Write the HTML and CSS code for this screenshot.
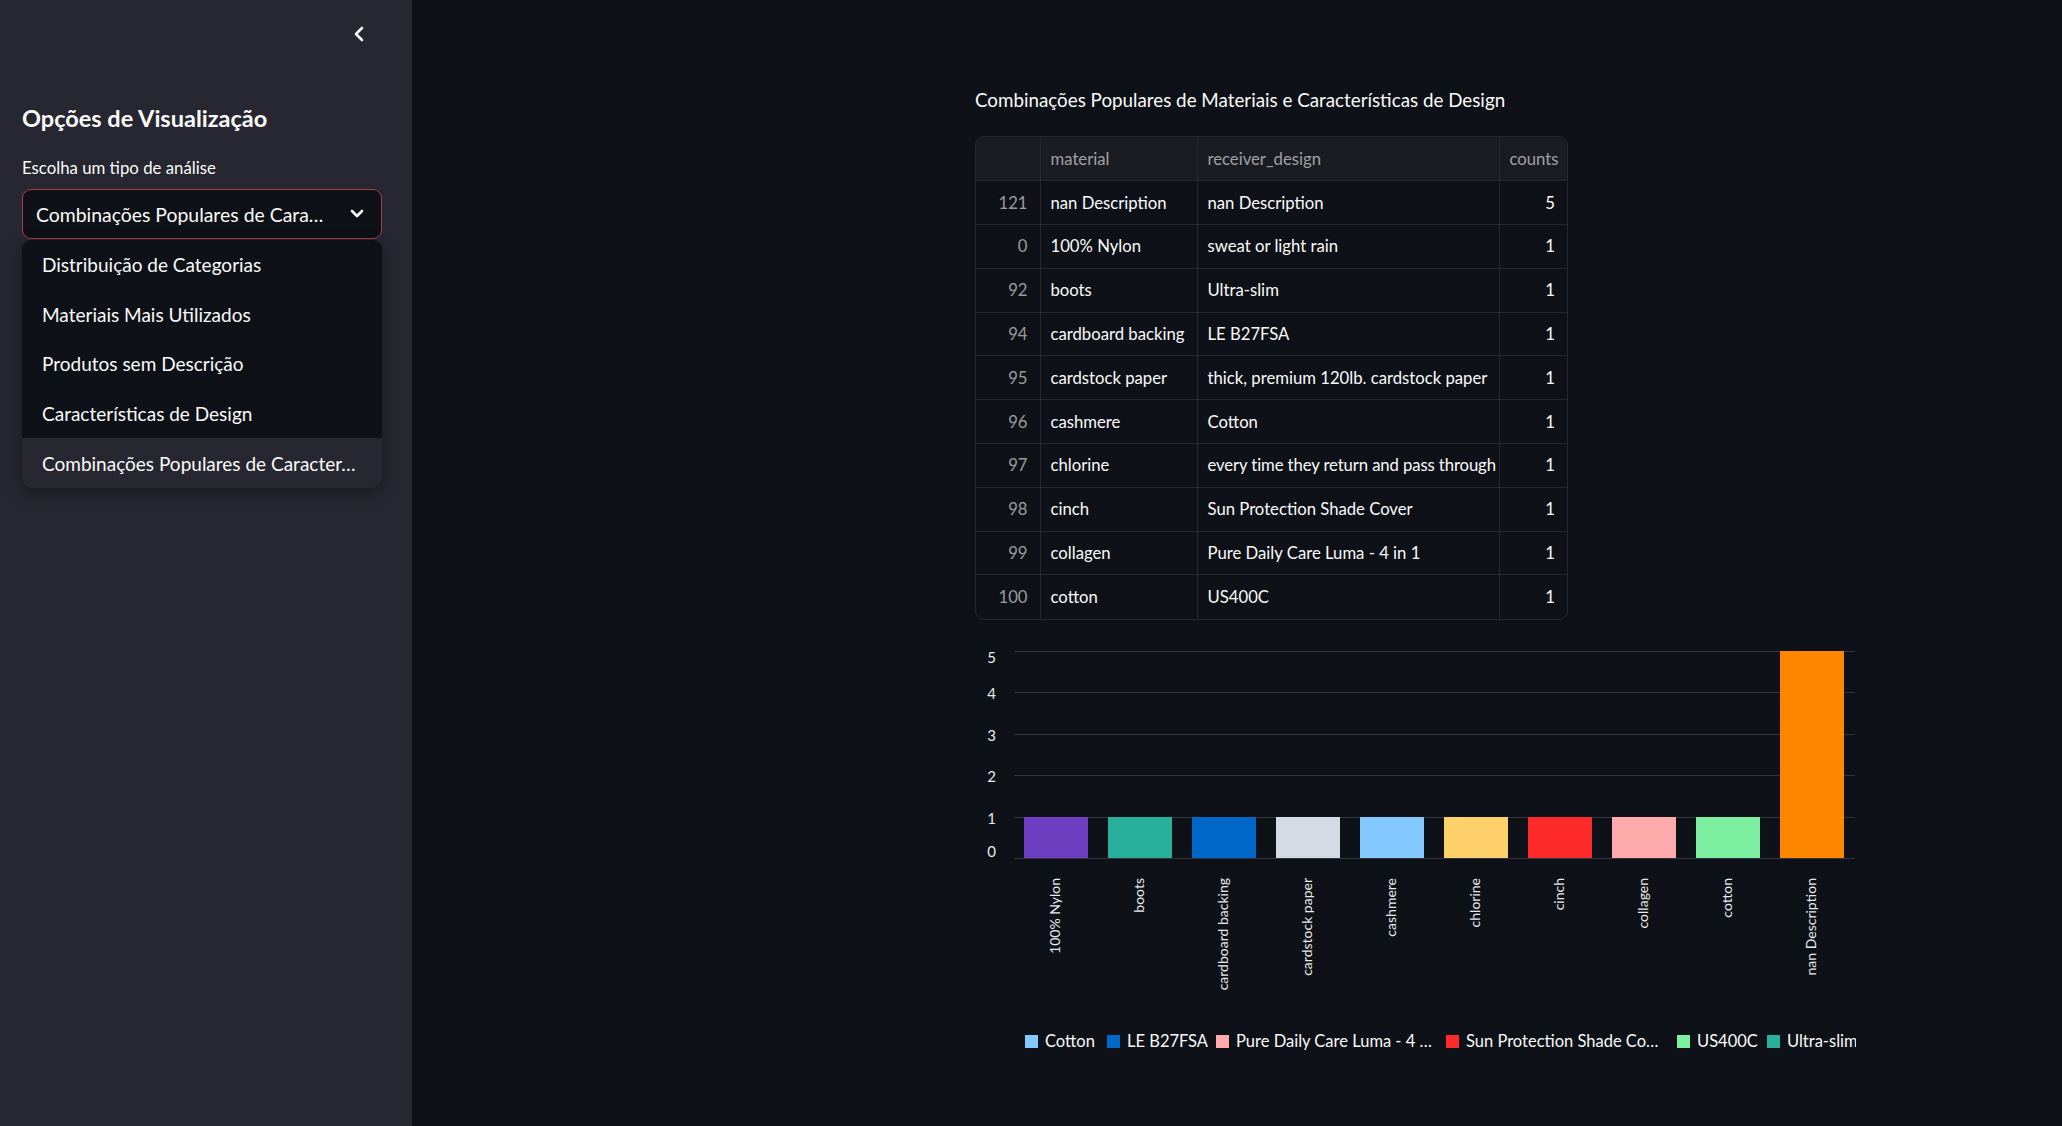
FILE: index.html
```html
<!DOCTYPE html>
<html lang="pt">
<head>
<meta charset="utf-8">
<title>Combinações Populares</title>
<link rel="stylesheet" href="styles.css">
</head>
<body>
<aside class="sidebar">
  <div class="sb-top">
    <span class="collapse">
      <svg width="14" height="18" viewBox="0 0 14 18"><polyline points="10,3 4,9 10,15" fill="none" stroke="#fafafa" stroke-width="2.6" stroke-linecap="round" stroke-linejoin="round"/></svg>
    </span>
  </div>
  <h2 class="sb-title">Opções de Visualização</h2>
  <div class="sb-label">Escolha um tipo de análise</div>
  <div class="select-wrap">
    <div class="select">
      <span class="select-value">Combinações Populares de Cara…</span>
      <svg class="select-chev" width="16" height="12" viewBox="0 0 16 12"><polyline points="3,3 8,8 13,3" fill="none" stroke="#fafafa" stroke-width="2.6" stroke-linecap="round" stroke-linejoin="round"/></svg>
    </div>
    <ul class="menu">
      <li class="menu-item">Distribuição de Categorias</li>
      <li class="menu-item">Materiais Mais Utilizados</li>
      <li class="menu-item">Produtos sem Descrição</li>
      <li class="menu-item">Características de Design</li>
      <li class="menu-item active">Combinações Populares de Caracter…</li>
    </ul>
  </div>
</aside>
<main class="main">
  <div class="block">
    <h3 class="title">Combinações Populares de Materiais e Características de Design</h3>
    <div class="table-wrap">
      <table class="grid">
        <colgroup><col class="c-idx"><col class="c-mat"><col class="c-rec"><col class="c-cnt"></colgroup>
        <thead>
          <tr><th class="idx"></th><th>material</th><th>receiver_design</th><th class="num">counts</th></tr>
        </thead>
        <tbody>
          <tr><td class="idx">121</td><td>nan Description</td><td>nan Description</td><td class="num">5</td></tr>
          <tr><td class="idx">0</td><td>100% Nylon</td><td>sweat or light rain</td><td class="num">1</td></tr>
          <tr><td class="idx">92</td><td>boots</td><td>Ultra-slim</td><td class="num">1</td></tr>
          <tr><td class="idx">94</td><td>cardboard backing</td><td>LE B27FSA</td><td class="num">1</td></tr>
          <tr><td class="idx">95</td><td>cardstock paper</td><td>thick, premium 120lb. cardstock paper</td><td class="num">1</td></tr>
          <tr><td class="idx">96</td><td>cashmere</td><td>Cotton</td><td class="num">1</td></tr>
          <tr><td class="idx">97</td><td>chlorine</td><td class="tight">every time they return and pass through</td><td class="num">1</td></tr>
          <tr><td class="idx">98</td><td>cinch</td><td>Sun Protection Shade Cover</td><td class="num">1</td></tr>
          <tr><td class="idx">99</td><td>collagen</td><td>Pure Daily Care Luma - 4 in 1</td><td class="num">1</td></tr>
          <tr><td class="idx">100</td><td>cotton</td><td>US400C</td><td class="num">1</td></tr>
        </tbody>
      </table>
    </div>
    <svg class="chart" width="881" height="440" viewBox="0 0 881 440">
      <g class="gridlines">
        <line x1="39" x2="880" y1="22.5" y2="22.5"/>
        <line x1="39" x2="880" y1="63.5" y2="63.5"/>
        <line x1="39" x2="880" y1="105.5" y2="105.5"/>
        <line x1="39" x2="880" y1="146.5" y2="146.5"/>
        <line x1="39" x2="880" y1="188.5" y2="188.5"/>
        <line x1="39" x2="880" y1="229.5" y2="229.5"/>
      </g>
      <g class="ylabels">
        <text x="21" y="34">5</text>
        <text x="21" y="70">4</text>
        <text x="21" y="112">3</text>
        <text x="21" y="153">2</text>
        <text x="21" y="195">1</text>
        <text x="21" y="228">0</text>
      </g>
      <g class="bars">
        <rect x="49" y="188" width="64" height="41" fill="#6d3fc0"/>
        <rect x="133" y="188" width="64" height="41" fill="#29b09d"/>
        <rect x="217" y="188" width="64" height="41" fill="#0068c9"/>
        <rect x="301" y="188" width="64" height="41" fill="#d5dae5"/>
        <rect x="385" y="188" width="64" height="41" fill="#83c9ff"/>
        <rect x="469" y="188" width="64" height="41" fill="#ffd16a"/>
        <rect x="553" y="188" width="64" height="41" fill="#ff2b2b"/>
        <rect x="637" y="188" width="64" height="41" fill="#ffabab"/>
        <rect x="721" y="188" width="64" height="41" fill="#7defa1"/>
        <rect x="805" y="22" width="64" height="207" fill="#ff8700"/>
      </g>
      <g class="xlabels">
        <text transform="translate(81,249) rotate(-90)">100% Nylon</text>
        <text transform="translate(165,249) rotate(-90)">boots</text>
        <text transform="translate(249,249) rotate(-90)">cardboard backing</text>
        <text transform="translate(333,249) rotate(-90)">cardstock paper</text>
        <text transform="translate(417,249) rotate(-90)">cashmere</text>
        <text transform="translate(501,249) rotate(-90)">chlorine</text>
        <text transform="translate(585,249) rotate(-90)">cinch</text>
        <text transform="translate(669,249) rotate(-90)">collagen</text>
        <text transform="translate(753,249) rotate(-90)">cotton</text>
        <text transform="translate(837,249) rotate(-90)">nan Description</text>
      </g>
      <g class="legend">
        <rect x="50" y="406" width="13" height="13" fill="#83c9ff"/><text x="70" y="418">Cotton</text>
        <rect x="132" y="406" width="13" height="13" fill="#0068c9"/><text x="152" y="418">LE B27FSA</text>
        <rect x="241" y="406" width="13" height="13" fill="#ffabab"/><text x="261" y="418">Pure Daily Care Luma - 4 …</text>
        <rect x="471" y="406" width="13" height="13" fill="#ff2b2b"/><text x="491" y="418">Sun Protection Shade Co…</text>
        <rect x="702" y="406" width="13" height="13" fill="#7defa1"/><text x="722" y="418">US400C</text>
        <rect x="792" y="406" width="13" height="13" fill="#29b09d"/><text x="812" y="418">Ultra-slim</text>
      </g>
    </svg>
  </div>
</main>
</body>
</html>
```
FILE: styles.css
```css
* { box-sizing: border-box; }
html, body { margin: 0; padding: 0; }
body {
  display: flex;
  width: 2062px;
  height: 1126px;
  overflow: hidden;
  background: #0e1117;
  color: #fafafa;
  font-family: "Lato", "Noto Sans", sans-serif;
}
.sidebar {
  width: 412px;
  flex: 0 0 412px;
  background: #262730;
  padding: 0 30px 0 22px;
}
.sb-top {
  height: 68px;
  display: flex;
  justify-content: flex-end;
  align-items: center;
}
.collapse {
  width: 14px;
  height: 18px;
  display: flex;
  margin-right: 16px;
}
.sb-title {
  margin: 36px 0 0;
  font-size: 23.5px;
  font-weight: 700;
  line-height: 29px;
}
.sb-label {
  margin-top: 24px;
  font-size: 16.8px;
  line-height: 22px;
}
.select-wrap {
  position: relative;
  margin-top: 10px;
  width: 360px;
}
.select {
  height: 50px;
  border: 1px solid #b03a43;
  border-radius: 9px;
  background: #0e1117;
  display: flex;
  align-items: center;
  justify-content: space-between;
  padding: 0 16px 0 13px;
  font-size: 19.4px;
}
.select-value { white-space: nowrap; }
.menu {
  position: absolute;
  left: 0;
  top: 51px;
  width: 360px;
  margin: 0;
  padding: 0;
  list-style: none;
  background: #0e1117;
  border-radius: 9px;
  overflow: hidden;
  box-shadow: 0 4px 16px rgba(0,0,0,0.35);
}
.menu-item {
  height: 49.6px;
  display: flex;
  align-items: center;
  padding-left: 20px;
  font-size: 19px;
  white-space: nowrap;
}
.menu-item.active { background: #262730; }

.main {
  flex: 1;
  padding: 86px 0 0 563px;
}
.block { width: 900px; }
.title {
  margin: 0;
  font-size: 18.8px;
  font-weight: 400;
  line-height: 28px;
}
.table-wrap {
  margin-top: 22px;
  width: 593px;
  border: 1px solid rgba(250,250,250,0.1);
  border-radius: 9px;
  overflow: hidden;
}
.grid {
  border-collapse: collapse;
  table-layout: fixed;
  width: 591px;
  font-size: 16.7px;
}
.c-idx { width: 64px; }
.c-mat { width: 157px; }
.c-rec { width: 302px; }
.c-cnt { width: 68px; }
.grid th, .grid td {
  height: 43.8px;
  padding: 0 10px;
  text-align: left;
  white-space: nowrap;
  overflow: hidden;
  border-right: 1px solid rgba(250,250,250,0.1);
  border-bottom: 1px solid rgba(250,250,250,0.1);
}
.grid tr > *:last-child { border-right: none; }
.grid tbody tr:last-child td { border-bottom: none; }
.grid th {
  font-weight: 400;
  color: rgba(250,250,250,0.6);
  background: #1a1c24;
}
.grid .idx { text-align: right; padding-right: 12px; color: rgba(250,250,250,0.6); }
.grid .num { text-align: right; padding-right: 12px; }
.grid td.tight { padding-right: 0; letter-spacing: -0.1px; }

.chart { display: block; margin-top: 9px; }
.gridlines line { stroke: #31333f; stroke-width: 1; }
.ylabels text { fill: #e6e9ef; font-size: 15px; text-anchor: end; }
.xlabels text { fill: #e6e9ef; font-size: 14px; text-anchor: end; dominant-baseline: middle; }
.legend text { fill: #fafafa; font-size: 16.5px; }
```
